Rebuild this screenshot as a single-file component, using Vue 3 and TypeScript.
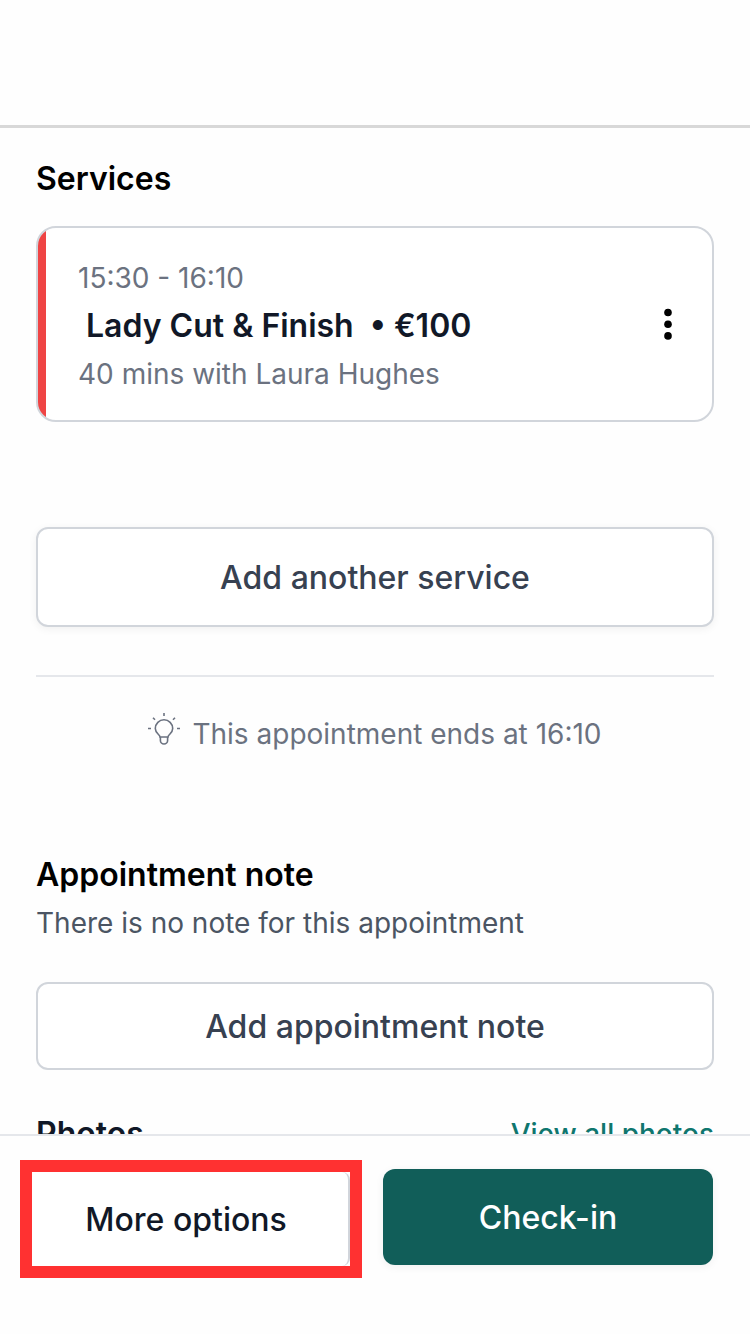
<script setup lang="ts">
interface Service {
  start: string
  end: string
  name: string
  price: string
  minutes: number
  staff: string
}

const services: Service[] = [
  { start: '15:30', end: '16:10', name: 'Lady Cut & Finish', price: '€100', minutes: 40, staff: 'Laura Hughes' },
]
const endsAt = '16:10'
</script>

<template>
  <div class="screen">
    <header class="top-bar"></header>

    <main class="content">
      <h2 class="title">Services</h2>
      <article v-for="service in services" :key="service.name" class="card">
        <div class="card-text">
          <p class="muted">{{ service.start }} - {{ service.end }}</p>
          <h3 class="service-name">
            <span>{{ service.name }}</span>
            <span>• {{ service.price }}</span>
          </h3>
          <p class="muted">{{ service.minutes }} mins with {{ service.staff }}</p>
        </div>
        <button class="menu" type="button" aria-label="Service options">
          <svg viewBox="0 0 8 32" width="8" height="32" aria-hidden="true">
            <circle cx="4" cy="4.5" r="3.8" />
            <circle cx="4" cy="16.2" r="3.8" />
            <circle cx="4" cy="27.9" r="3.8" />
          </svg>
        </button>
      </article>

      <button class="outline add-service" type="button">Add another service</button>
      <hr class="divider" />

      <p class="hint muted">
        <svg class="bulb" viewBox="0 0 32 32" width="32" height="32" fill="none" stroke="currentColor" stroke-width="1.6" aria-hidden="true">
          <path d="M12 24C12 21.5 7.3 20.5 7.3 15.5a8.7 8.7 0 0 1 17.4 0C24.7 20.5 20 21.5 20 24z" />
          <path d="M12.4 24v3.4a3.6 3.6 0 0 0 7.2 0V24" />
          <path d="M16 0v3M5 4.8l2 2M27 4.8l-2 2M0 15.5h3M29 15.5h3" />
        </svg>
        <span>This appointment ends at {{ endsAt }}</span>
      </p>

      <h2 class="title note-title">Appointment note</h2>
      <p class="note-text">There is no note for this appointment</p>
      <button class="outline add-note" type="button">Add appointment note</button>

      <div class="photos">
        <h2 class="title photos-title">Photos</h2>
        <a class="link" href="#photos">View all photos</a>
      </div>
    </main>

    <footer class="actions">
      <div class="highlight">
        <button class="more" type="button">More options</button>
      </div>
      <button class="check-in" type="button">Check-in</button>
    </footer>
  </div>
</template>

<style>
body {
  margin: 0;
  background: #fff;
}
</style>

<style scoped>
.screen {
  display: flex;
  flex-direction: column;
  height: 100vh;
  overflow: hidden;
  background: #fefefe;
  color: #111827;
  font-family: Inter, 'Liberation Sans', sans-serif;
  font-size: 28px;
  line-height: 48px;
}
.top-bar {
  flex: none;
  padding-top: 125px;
  border-bottom: 3px solid #d8d8d8;
}
.content {
  flex: 1;
  min-height: 0;
  overflow-y: auto;
  scrollbar-width: none;
  padding: 27px 36px 48px;
}
h2, h3, p {
  margin: 0;
}
button {
  font: inherit;
  cursor: pointer;
}
.title {
  font-size: 32px;
  font-weight: 600;
  color: #000;
}
.muted {
  color: #6b7280;
}
.card {
  display: flex;
  align-items: center;
  justify-content: space-between;
  margin-top: 23px;
  overflow: hidden;
  border: 2px solid #d1d5db;
  border-radius: 20px;
  background: linear-gradient(to right, #ef4444 8px, #fff 8px);
  padding: 24px 32px 24px 40px;
}
.card-text {
  padding-top: 2px;
  margin-bottom: -2px;
}
.service-name {
  display: flex;
  gap: 16px;
  padding-left: 8px;
  font-size: 32px;
  font-weight: 600;
}
.menu {
  display: flex;
  padding: 8px;
  border: 0;
  background: none;
}
.outline {
  display: block;
  width: 100%;
  border: 2px solid #d1d5db;
  border-radius: 12px;
  background: #fff;
  color: #374151;
  font-size: 32px;
  font-weight: 500;
}
.add-service {
  margin-top: 105px;
  padding: 25px 24px 23px;
  box-shadow: 0 2px 8px rgba(0, 0, 0, 0.06);
}
.divider {
  margin: 48px 0 33px;
  border: 0;
  border-top: 2px solid #e5e7eb;
}
.hint {
  display: flex;
  justify-content: center;
  gap: 12px;
}
.bulb {
  margin-top: 3px;
}
.note-title {
  margin-top: 93px;
}
.note-text {
  color: #4b5563;
}
.add-note {
  margin-top: 35px;
  padding: 19px 24px 17px;
}
.photos {
  display: flex;
  justify-content: space-between;
  margin-top: 40px;
}
.photos-title {
  color: #111827;
}
.link {
  color: #0f766e;
  font-weight: 500;
  text-decoration: none;
}
.actions {
  flex: none;
  display: grid;
  grid-template-columns: 342fr 330fr;
  gap: 21px;
  align-items: start;
  padding: 24px 37px 56px 20px;
  border-top: 2px solid #e5e7eb;
}
.highlight {
  border: 12px solid #ff3131;
  background: #fefefe;
}
.more {
  display: block;
  width: 100%;
  border: 0;
  border-right: 2px solid #d1d5db;
  border-radius: 0 8px 8px 0;
  background: #fff;
  color: #111827;
  padding: 24px 8px 22px 0;
  font-size: 32px;
  font-weight: 500;
}
.check-in {
  margin-top: 9px;
  padding: 25px 24px 23px;
  border: 0;
  border-radius: 12px;
  background: #115e59;
  color: #fff;
  font-size: 32px;
  font-weight: 500;
  box-shadow: 0 2px 8px rgba(0, 0, 0, 0.06);
}
</style>
